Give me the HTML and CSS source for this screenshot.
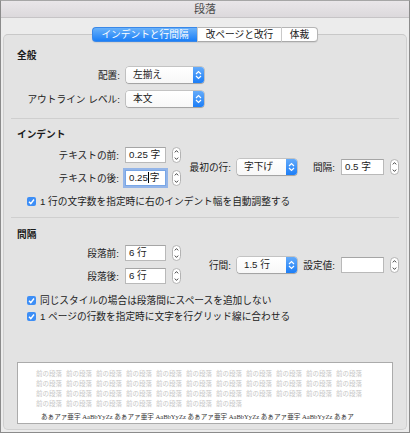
FILE: index.html
```html
<!DOCTYPE html>
<html lang="ja">
<head>
  <meta charset="UTF-8">
  <title>段落</title>
  <link rel="stylesheet" href="styles.css">
</head>
<body>
  <div class="window">
    <div class="titlebar">段落</div>

    <div class="content">
      <div class="tabs">
        <div class="tab tab-active">インデントと行間隔</div>
        <div class="tab tab-break">改ページと改行</div>
        <div class="tab tab-style">体裁</div>
      </div>

      <div class="panel">
        <!-- 全般 -->
        <div class="group general">
          <h3>全般</h3>
          <div class="row">
            <span class="lbl">配置:</span>
            <div class="select select-wide">
              <span class="select-text">左揃え</span>
              <span class="arrows"><svg width="11" height="16" viewBox="0 0 11 16"><path d="M3 7 L5.5 4.6 L8 7 M3 9 L5.5 11.4 L8 9" fill="none" stroke="#fff" stroke-width="1.2"/></svg></span>
            </div>
          </div>
          <div class="row">
            <span class="lbl">アウトライン レベル:</span>
            <div class="select select-wide">
              <span class="select-text">本文</span>
              <span class="arrows"><svg width="11" height="16" viewBox="0 0 11 16"><path d="M3 7 L5.5 4.6 L8 7 M3 9 L5.5 11.4 L8 9" fill="none" stroke="#fff" stroke-width="1.2"/></svg></span>
            </div>
          </div>
        </div>

        <div class="sep"></div>

        <!-- インデント -->
        <div class="group indent">
          <h3>インデント</h3>
          <div class="fields">
            <div class="pair">
              <div class="row">
                <span class="lbl">テキストの前:</span>
                <div class="field">0.25 字</div>
                <svg class="stepper" width="9" height="16" viewBox="0 0 9 16"><rect x="0.5" y="0.5" width="8" height="15" rx="4" fill="#fff" stroke="#b3b3b3"/><path d="M2.8 5.4 L4.5 3.6 L6.2 5.4 M2.8 10.6 L4.5 12.4 L6.2 10.6" fill="none" stroke="#444" stroke-width="1"/></svg>
              </div>
              <div class="row">
                <span class="lbl">テキストの後:</span>
                <div class="field field-focus">0.25<span class="caret"></span>字</div>
                <svg class="stepper" width="9" height="16" viewBox="0 0 9 16"><rect x="0.5" y="0.5" width="8" height="15" rx="4" fill="#fff" stroke="#b3b3b3"/><path d="M2.8 5.4 L4.5 3.6 L6.2 5.4 M2.8 10.6 L4.5 12.4 L6.2 10.6" fill="none" stroke="#444" stroke-width="1"/></svg>
              </div>
            </div>
            <span class="lbl-mid">最初の行:</span>
            <div class="select select-narrow">
              <span class="select-text">字下げ</span>
              <span class="arrows"><svg width="11" height="16" viewBox="0 0 11 16"><path d="M3 7 L5.5 4.6 L8 7 M3 9 L5.5 11.4 L8 9" fill="none" stroke="#fff" stroke-width="1.2"/></svg></span>
            </div>
            <span class="lbl-right">間隔:</span>
            <div class="field field-right">0.5 字</div>
            <svg class="stepper" width="9" height="16" viewBox="0 0 9 16"><rect x="0.5" y="0.5" width="8" height="15" rx="4" fill="#fff" stroke="#b3b3b3"/><path d="M2.8 5.4 L4.5 3.6 L6.2 5.4 M2.8 10.6 L4.5 12.4 L6.2 10.6" fill="none" stroke="#444" stroke-width="1"/></svg>
          </div>
          <div class="check check-first">
            <svg class="box" width="9" height="9" viewBox="0 0 9 9"><rect width="9" height="9" rx="2" fill="#3d8ef6"/><path d="M2 4.7 L3.8 6.6 L7 2.5" fill="none" stroke="#fff" stroke-width="1.4"/></svg>
            <span>1 行の文字数を指定時に右のインデント幅を自動調整する</span>
          </div>
        </div>

        <div class="sep sep-second"></div>

        <!-- 間隔 -->
        <div class="group spacing">
          <h3>間隔</h3>
          <div class="fields">
            <div class="pair">
              <div class="row">
                <span class="lbl">段落前:</span>
                <div class="field">6 行</div>
                <svg class="stepper" width="9" height="16" viewBox="0 0 9 16"><rect x="0.5" y="0.5" width="8" height="15" rx="4" fill="#fff" stroke="#b3b3b3"/><path d="M2.8 5.4 L4.5 3.6 L6.2 5.4 M2.8 10.6 L4.5 12.4 L6.2 10.6" fill="none" stroke="#444" stroke-width="1"/></svg>
              </div>
              <div class="row">
                <span class="lbl">段落後:</span>
                <div class="field">6 行</div>
                <svg class="stepper" width="9" height="16" viewBox="0 0 9 16"><rect x="0.5" y="0.5" width="8" height="15" rx="4" fill="#fff" stroke="#b3b3b3"/><path d="M2.8 5.4 L4.5 3.6 L6.2 5.4 M2.8 10.6 L4.5 12.4 L6.2 10.6" fill="none" stroke="#444" stroke-width="1"/></svg>
              </div>
            </div>
            <span class="lbl-mid">行間:</span>
            <div class="select select-narrow">
              <span class="select-text">1.5 行</span>
              <span class="arrows"><svg width="11" height="16" viewBox="0 0 11 16"><path d="M3 7 L5.5 4.6 L8 7 M3 9 L5.5 11.4 L8 9" fill="none" stroke="#fff" stroke-width="1.2"/></svg></span>
            </div>
            <span class="lbl-right">設定値:</span>
            <div class="field field-right"></div>
            <svg class="stepper" width="9" height="16" viewBox="0 0 9 16"><rect x="0.5" y="0.5" width="8" height="15" rx="4" fill="#fff" stroke="#b3b3b3"/><path d="M2.8 5.4 L4.5 3.6 L6.2 5.4 M2.8 10.6 L4.5 12.4 L6.2 10.6" fill="none" stroke="#444" stroke-width="1"/></svg>
          </div>
          <div class="check check-first">
            <svg class="box" width="9" height="9" viewBox="0 0 9 9"><rect width="9" height="9" rx="2" fill="#3d8ef6"/><path d="M2 4.7 L3.8 6.6 L7 2.5" fill="none" stroke="#fff" stroke-width="1.4"/></svg>
            <span>同じスタイルの場合は段落間にスペースを追加しない</span>
          </div>
          <div class="check">
            <svg class="box" width="9" height="9" viewBox="0 0 9 9"><rect width="9" height="9" rx="2" fill="#3d8ef6"/><path d="M2 4.7 L3.8 6.6 L7 2.5" fill="none" stroke="#fff" stroke-width="1.4"/></svg>
            <span>1 ページの行数を指定時に文字を行グリッド線に合わせる</span>
          </div>
        </div>

        <!-- プレビュー -->
        <div class="preview">
          <div class="prev-row">
            <span class="u">前の段落</span><span class="u">前の段落</span><span class="u">前の段落</span><span class="u">前の段落</span><span class="u">前の段落</span><span class="u">前の段落</span><span class="u">前の段落</span><span class="u">前の段落</span><span class="u">前の段落</span><span class="u">前の段落</span><span class="u">前の段落</span>
          </div>
          <div class="prev-row">
            <span class="u">前の段落</span><span class="u">前の段落</span><span class="u">前の段落</span><span class="u">前の段落</span><span class="u">前の段落</span><span class="u">前の段落</span><span class="u">前の段落</span><span class="u">前の段落</span><span class="u">前の段落</span><span class="u">前の段落</span><span class="u">前の段落</span>
          </div>
          <div class="prev-row">
            <span class="u">前の段落</span><span class="u">前の段落</span><span class="u">前の段落</span><span class="u">前の段落</span><span class="u">前の段落</span><span class="u">前の段落</span><span class="u">前の段落</span><span class="u">前の段落</span><span class="u">前の段落</span><span class="u">前の段落</span><span class="u">前の段落</span>
          </div>
          <div class="prev-row">
            <span class="u">前の段落</span><span class="u">前の段落</span><span class="u">前の段落</span><span class="u">前の段落</span><span class="u">前の段落</span><span class="u">前の段落</span><span class="u">前の段落</span>
          </div>
          <div class="prev-sample">あぁアァ亜宇 AaBbYyZz あぁアァ亜宇 AaBbYyZz あぁアァ亜宇 AaBbYyZz あぁアァ亜宇 AaBbYyZz あぁア</div>
        </div>
      </div>
    </div>
  </div>
</body>
</html>
```

FILE: styles.css
```css
html, body {
  margin: 0;
  padding: 0;
}

body {
  width: 410px;
  height: 433px;
  overflow: hidden;
  background-color: #ececec;
  font-family: 'Liberation Sans', 'Noto Sans CJK JP', sans-serif;
  font-size: 9.7px;
  color: #222;
}

.window {
  box-sizing: border-box;
  width: 410px;
  height: 433px;
  border: 1px solid #8b8b8b;
  border-top-color: #a6a6a6;
  background-color: #ececec;
}

.titlebar {
  height: 16px;
  line-height: 16px;
  text-align: center;
  font-size: 11px;
  color: #4c4c4c;
  background: linear-gradient(#e9e6e9, #dcd9dc);
  border-bottom: 1px solid #c6c4c6;
}

.content {
  padding: 9px 2px 0 2px;
}

/* タブ */
.tabs {
  position: relative;
  z-index: 1;
  display: flex;
  justify-content: center;
  margin-bottom: -8px;
}

.tab {
  box-sizing: border-box;
  height: 15px;
  line-height: 13px;
  text-align: center;
  background: #fff;
  border-top: 1px solid #b5b5b5;
  border-bottom: 1px solid #a9a9a9;
  box-shadow: 0 1px 1px rgba(0, 0, 0, 0.08);
}

.tab-active {
  width: 105px;
  color: #fff;
  background: linear-gradient(#6ab2fa, #1b7ff7);
  border: 1px solid #3a88e8;
  border-right: none;
  border-radius: 4px 0 0 4px;
}

.tab-break {
  width: 84px;
  border-left: 1px solid #c9c9c9;
}

.tab-style {
  width: 37px;
  border-left: 1px solid #c9c9c9;
  border-right: 1px solid #b5b5b5;
  border-radius: 0 4px 4px 0;
}

.panel {
  box-sizing: border-box;
  height: 396px;
  background-color: #e3e3e3;
  border: 1px solid #d0d0d0;
  border-top-color: #c8c8c8;
  border-radius: 5px;
}

.group {
  padding-left: 13px;
}

.group h3 {
  margin: 0;
  font-family: 'Noto Sans CJK JP', sans-serif;
  font-size: 9.7px;
  font-weight: bold;
  line-height: 14px;
  color: #1c1c1c;
}

.general {
  padding-top: 13px;
}

.general h3 {
  margin-bottom: 5px;
}

.general .row + .row {
  margin-top: 8px;
}

.general .lbl {
  width: 103px;
}

.indent {
  padding-top: 8px;
}

.indent h3 {
  margin-bottom: 6px;
}

.spacing {
  padding-top: 9px;
}

.spacing h3 {
  margin-bottom: 4px;
}

.sep {
  margin: 11px 7px 0;
  border-top: 1px solid #cfcfcf;
}

.sep-second {
  margin-top: 9px;
}

.row {
  display: flex;
  align-items: center;
  height: 16px;
}

.lbl {
  width: 102px;
  margin-right: 6px;
  text-align: right;
  white-space: nowrap;
}

.pair .row + .row {
  margin-top: 7px;
}

.fields {
  display: flex;
  align-items: center;
}

.lbl-mid {
  width: 42px;
  margin-left: 8px;
  text-align: right;
  white-space: nowrap;
}

.lbl-right {
  width: 38px;
  text-align: right;
  white-space: nowrap;
}

/* ポップアップ */
.select {
  box-sizing: border-box;
  display: flex;
  height: 16px;
  background: linear-gradient(#ffffff, #f7f7f7);
  border-radius: 3px;
  box-shadow: 0 0 0 0.5px rgba(0, 0, 0, 0.28), 0 1px 1px rgba(0, 0, 0, 0.18);
}

.select-wide {
  width: 78px;
}

.select-narrow {
  width: 60px;
  margin-left: 6px;
}

.select-text {
  flex: 1;
  padding-left: 7px;
  line-height: 16px;
  white-space: nowrap;
}

.arrows {
  width: 11px;
  height: 16px;
  background: linear-gradient(#64abfa, #1c7ef7);
  border-radius: 0 3px 3px 0;
}

.arrows svg {
  display: block;
}

/* テキストフィールド */
.field {
  box-sizing: border-box;
  width: 41px;
  height: 16px;
  padding-left: 3px;
  line-height: 14px;
  background: #fff;
  border: 1px solid #b9b9b9;
  border-top-color: #a5a5a5;
  white-space: nowrap;
}

.field-focus {
  border-color: #78a6e6;
  box-shadow: 0 0 0 2px rgba(95, 150, 235, 0.6);
}

.caret {
  display: inline-block;
  width: 1px;
  height: 11px;
  margin: 0 1px 0 0;
  vertical-align: -2px;
  background: #000;
}

.field-right {
  width: 43px;
  margin-left: 6px;
}

.stepper {
  display: block;
  margin-left: 6px;
  flex-shrink: 0;
}

/* チェックボックス */
.check {
  display: flex;
  align-items: center;
  height: 14px;
  margin-top: 2px;
  padding-left: 10px;
  white-space: nowrap;
}

.check-first {
  margin-top: 8px;
}

.spacing .check-first {
  margin-top: 9px;
}

.check .box {
  display: block;
  margin-right: 4px;
  flex-shrink: 0;
}

/* プレビュー */
.preview {
  box-sizing: border-box;
  width: 376px;
  height: 62px;
  margin: 39px 0 0 13px;
  padding: 6px 0 0 18px;
  background: #fff;
  border: 1px solid #ababab;
  overflow: hidden;
}

.prev-row {
  height: 10px;
  line-height: 10px;
  white-space: nowrap;
  font-family: 'Liberation Serif', 'Noto Sans CJK JP', serif;
  font-size: 6.5px;
  color: #c6c6c6;
}

.prev-row .u {
  display: inline-block;
  width: 30px;
}

.prev-sample {
  margin-top: 3px;
  padding-left: 5px;
  line-height: 10px;
  white-space: nowrap;
  font-family: 'Liberation Serif', 'Noto Sans CJK JP', serif;
  font-size: 6.6px;
  color: #333;
}
```
